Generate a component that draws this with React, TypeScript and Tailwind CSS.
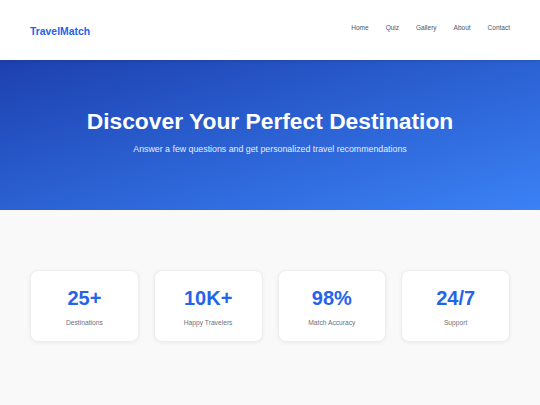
import React from "react";

const stats = [
  { n: "25+", l: "Destinations" },
  { n: "10K+", l: "Happy Travelers" },
  { n: "98%", l: "Match Accuracy" },
  { n: "24/7", l: "Support" },
];

export default function App() {
  return (
    <div className="min-h-[405px] bg-[#f9f9f9]" style={{ fontFamily: '"Liberation Sans", Arial, sans-serif' }}>
      <header className="relative z-10 h-[60px] bg-white shadow-[0_1px_3px_rgba(0,0,0,0.12)] flex items-center justify-between px-[30px]">
        <div className="text-[10.4px] font-bold text-[#2563eb] mt-[3px]">TravelMatch</div>
        <nav className="flex gap-[17px] text-[6.5px] text-[#4b5563] -mt-[5px]">
          <span>Home</span>
          <span>Quiz</span>
          <span>Gallery</span>
          <span>About</span>
          <span>Contact</span>
        </nav>
      </header>
      <section className="h-[150px] pb-[6px] bg-gradient-to-br from-[#1e40af] to-[#3b82f6] flex flex-col items-center justify-center text-white">
        <h1 className="text-[22.8px] font-bold leading-[28px]">Discover Your Perfect Destination</h1>
        <p className="text-[8.8px] mt-[8px] text-[#e5ecff]">Answer a few questions and get personalized travel recommendations</p>
      </section>
      <section className="px-[30px] pt-[60px] pb-[60px]">
        <div className="grid grid-cols-4 gap-[15px]">
          {stats.map((s) => (
            <div key={s.l} className="h-[72px] pt-[3px] bg-white rounded-[8px] border border-[#eceef1] shadow-[0_1px_4px_rgba(0,0,0,0.06)] flex flex-col items-center justify-center">
              <div className="text-[20px] font-bold text-[#2563eb] leading-[24px]">{s.n}</div>
              <div className="text-[6.7px] text-[#6b7280] mt-[8px]">{s.l}</div>
            </div>
          ))}
        </div>
      </section>
    </div>
  );
}
